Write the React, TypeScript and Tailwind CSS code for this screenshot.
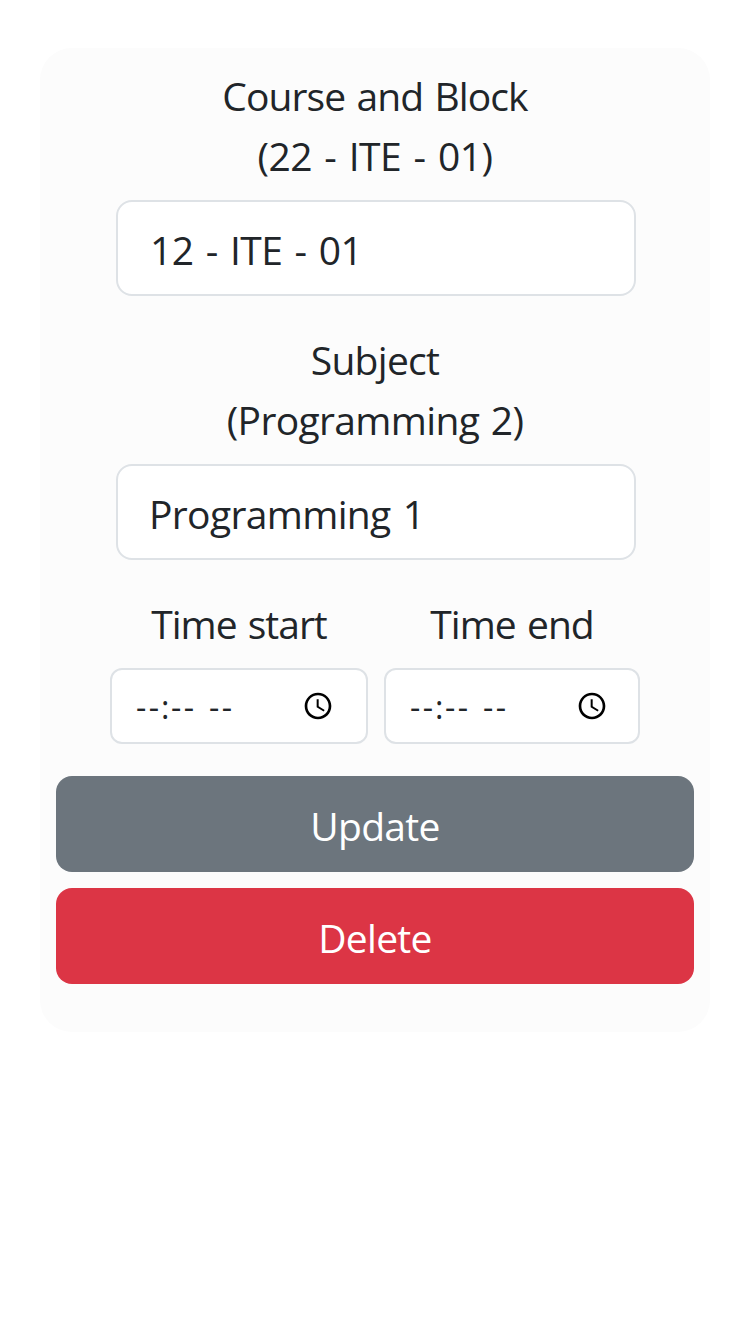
import React from 'react';

function ClockIcon() {
  return (
    <svg viewBox="0 0 24 24" className="block h-8 w-8 shrink-0" fill="#000">
      <path d="M11.99 2C6.47 2 2 6.48 2 12s4.47 10 9.99 10C17.52 22 22 17.52 22 12S17.52 2 11.99 2zM12 20c-4.42 0-8-3.58-8-8s3.58-8 8-8 8 3.58 8 8-3.58 8-8 8z" />
      <path d="M12.5 7H11v6l5.25 3.15.75-1.23-4.5-2.67z" />
    </svg>
  );
}

function TimeField({ label, className, labelClass, boxClass }: { label: string; className: string; labelClass: string; boxClass: string }) {
  return (
    <div className={className}>
      <div className={`h-[60px] pt-0.5 text-center whitespace-nowrap ${labelClass}`}>{label}</div>
      <div className={`mt-4 flex h-[76px] items-center justify-between rounded-xl border-2 border-[#dee2e6] bg-white pl-6 text-[32px] ${boxClass}`}>
        <span className="flex pt-0.5 leading-[48px] whitespace-pre">
          <span className="w-[25px] tracking-[2.5px]">--</span>
          <span className="w-[10px]">:</span>
          <span className="w-[38px] tracking-[2.5px]">--</span>
          <span className="tracking-[2.5px]">--</span>
        </span>
        <ClockIcon />
      </div>
    </div>
  );
}

const line = 'h-[60px] pt-0.5';
const field = 'ml-[60px] mt-4 flex h-24 w-[520px] items-center rounded-2xl border-2 border-[#dee2e6] bg-white pt-[3px] whitespace-nowrap';
const button = 'flex h-24 w-full items-center justify-center rounded-2xl pt-[3px] text-white tracking-[-0.7px]';

export default function App() {
  return (
    <main className="min-h-[1334px] bg-white px-10 pt-12 font-['Open_Sans',sans-serif] text-[39px] leading-[60px] text-[#212529]">
      <section className="h-[984px] rounded-[32px] bg-[#fcfcfc] px-4 pt-4">
        <div className="text-center">
          <div className={`${line} tracking-[-0.9px] [word-spacing:2px]`}>Course and Block</div>
          <div className={`${line} tracking-[-0.5px] [word-spacing:2.7px]`}>(22 - ITE - 01)</div>
        </div>
        <div className={`${field} pl-8 tracking-[-0.5px] [word-spacing:2.5px]`}>12 - ITE - 01</div>
        <div className="mt-8 text-center">
          <div className={`${line} tracking-[-0.7px]`}>Subject</div>
          <div className={`${line} tracking-[-0.65px] [word-spacing:2px]`}>(Programming 2)</div>
        </div>
        <div className={`${field} pl-[31px] tracking-[-0.65px] [word-spacing:2.5px]`}>Programming 1</div>
        <div className="mt-8 flex gap-4 pl-[54px]">
          <TimeField label="Time start" className="w-[258px]" labelClass="tracking-[-1px] [word-spacing:2px]" boxClass="pr-8" />
          <TimeField label="Time end" className="w-[256px]" labelClass="tracking-[-0.95px] [word-spacing:2px]" boxClass="pr-[30px]" />
        </div>
        <button className={`${button} mt-8 bg-[#6c757d]`}>Update</button>
        <button className={`${button} mt-4 bg-[#dc3545]`}>Delete</button>
      </section>
    </main>
  );
}
